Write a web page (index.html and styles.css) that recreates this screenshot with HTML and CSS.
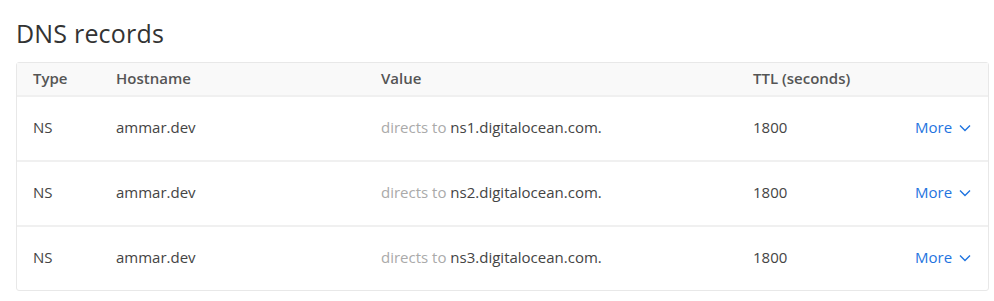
FILE: index.html
```html
<!DOCTYPE html>
<html>
<head>
<meta charset="utf-8">
<link rel="stylesheet" href="styles.css">
</head>
<body>
<div class="page">
  <h2 class="title">DNS records</h2>
  <div class="table">
    <div class="row head">
      <div class="c type">Type</div>
      <div class="c host">Hostname</div>
      <div class="c value">Value</div>
      <div class="c ttl">TTL (seconds)</div>
      <div class="c more"></div>
    </div>
    <div class="row">
      <div class="c type">NS</div>
      <div class="c host">ammar.dev</div>
      <div class="c value"><span class="muted">directs to</span> ns1.digitalocean.com.</div>
      <div class="c ttl">1800</div>
      <div class="c more"><a class="morelink">More <svg width="12" height="8" viewBox="0 0 12 8"><path d="M1 1.5l5 5 5-5" fill="none" stroke="currentColor" stroke-width="1.4"/></svg></a></div>
    </div>
    <div class="row">
      <div class="c type">NS</div>
      <div class="c host">ammar.dev</div>
      <div class="c value"><span class="muted">directs to</span> ns2.digitalocean.com.</div>
      <div class="c ttl">1800</div>
      <div class="c more"><a class="morelink">More <svg width="12" height="8" viewBox="0 0 12 8"><path d="M1 1.5l5 5 5-5" fill="none" stroke="currentColor" stroke-width="1.4"/></svg></a></div>
    </div>
    <div class="row">
      <div class="c type">NS</div>
      <div class="c host">ammar.dev</div>
      <div class="c value"><span class="muted">directs to</span> ns3.digitalocean.com.</div>
      <div class="c ttl">1800</div>
      <div class="c more"><a class="morelink">More <svg width="12" height="8" viewBox="0 0 12 8"><path d="M1 1.5l5 5 5-5" fill="none" stroke="currentColor" stroke-width="1.4"/></svg></a></div>
    </div>
  </div>
</div>
</body>
</html>
```
FILE: styles.css
```css
* { box-sizing: border-box; }
body {
  margin: 0;
  background: #fff;
  font-family: "Open Sans", "Liberation Sans", sans-serif;
  color: #444;
}
.page {
  padding: 17px 5px 0 16px;
}
.title {
  margin: 0 0 12px 0;
  font-weight: 400;
  font-size: 25px;
  line-height: 33px;
  color: #333;
  letter-spacing: 0.2px;
}
.table {
  border: 1px solid #e8e8e8;
  border-radius: 3px;
  width: 973px;
}
.row {
  display: grid;
  grid-template-columns: 99px 265px 372px 162px 1fr;
  align-items: center;
  height: 65px;
  border-top: 2px solid #f0f0f0;
  font-size: 15px;
  padding-bottom: 3px;
}
.row.head {
  height: 32px;
  border-top: none;
  background: #f9f9f9;
  font-weight: 600;
  color: #555;
  padding-bottom: 2px;
}
.c.type { padding-left: 16px; }
.muted { color: #aaa; }
.more { text-align: right; padding-right: 17px; }
.morelink {
  color: #1f74e0;
  display: inline-flex;
  align-items: center;
  gap: 7px;
}
.morelink svg { margin-top: 1px; }
```
